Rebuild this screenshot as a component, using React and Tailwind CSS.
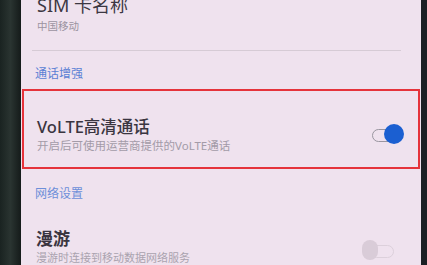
import React from "react";

const font = { fontFamily: '"Noto Sans", "Noto Sans CJK SC", sans-serif' };

function Toggle({ on }) {
  return on ? (
    <div className="relative w-[32px] h-[20px]">
      <div className="absolute left-0 top-[5px] w-[24px] h-[13px] rounded-full border-[1.5px] border-[#9a96a0]" />
      <div className="absolute right-0 top-0 w-[20px] h-[20px] rounded-full bg-[#1b5fd1]" />
    </div>
  ) : (
    <div className="relative w-[32px] h-[20px]">
      <div className="absolute right-0 top-[5px] w-[24px] h-[13px] rounded-full border-[1.5px] border-[#dcd0db]" />
      <div className="absolute left-0 top-0 w-[16px] h-[20px] rounded-full bg-[#d9ccd8]" />
    </div>
  );
}

export default function App() {
  return (
    <div className="flex w-[427px] h-[265px] overflow-hidden bg-[#efe2ee]" style={font}>
      {/* phone bezel left */}
      <div className="w-[21px] h-full bg-gradient-to-r from-[#1a2321] via-[#2a3431] to-[#151b1a]" />

      <div className="flex-1 flex flex-col">
        {/* SIM */}
        <div className="pl-[16px] -mt-[5px]">
          <div className="text-[18px] leading-[20px] text-[#3c3742]">SIM 卡名称</div>
          <div className="mt-[5px] text-[10.5px] leading-[12px] text-[#9b93a0]">中国移动</div>
        </div>
        <div className="mt-[18px] ml-[11px] mr-[20px] h-px bg-[#d6cbd5]" />

        <div className="pl-[14px] mt-[16px] text-[12px] leading-[14px] text-[#5a7fd4]">通话增强</div>

        {/* highlighted VoLTE row */}
        <div className="mt-[8px] ml-[1px] mr-[1px] h-[82px] border-2 border-[#e5333b] flex items-center pl-[13px] pr-[14px]">
          <div className="flex-1 pt-[12px]">
            <div className="text-[16.5px] leading-[20px] font-medium text-[#3a3540]">VoLTE高清通话</div>
            <div className="mt-[2px] text-[11.5px] leading-[14px] text-[#a39ba8]">开启后可使用运营商提供的VoLTE通话</div>
          </div>
          <div className="pt-[10px]">
            <Toggle on />
          </div>
        </div>

        <div className="pl-[14px] mt-[18px] text-[12px] leading-[14px] text-[#6d8fd9]">网络设置</div>

        {/* roaming */}
        <div className="mt-[27px] flex pl-[15px] pr-[27px]">
          <div className="flex-1">
            <div className="text-[17px] leading-[22px] font-bold text-[#3a3540]">漫游</div>
            <div className="mt-[1px] text-[11px] leading-[14px] text-[#aaa2ae]">漫游时连接到移动数据网络服务</div>
          </div>
          <div className="pt-[12px]">
            <Toggle />
          </div>
        </div>
      </div>

      {/* phone bezel right */}
      <div className="w-[6px] h-full bg-[#1b1f24]" />
    </div>
  );
}
